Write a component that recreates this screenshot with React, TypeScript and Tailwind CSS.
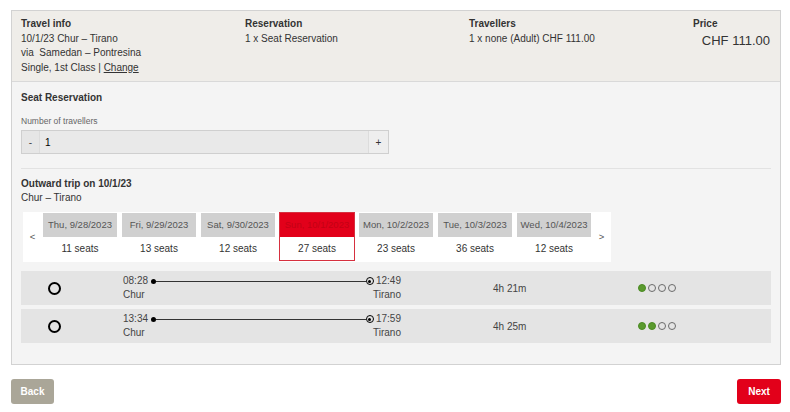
import React, { useState } from 'react';

interface DayTab {
    label: string;
    seats: number;
}

interface Connection {
    dep: string;
    arr: string;
    from: string;
    to: string;
    duration: string;
    load: number;
}

const days: DayTab[] = [
    { label: 'Thu, 9/28/2023', seats: 11 },
    { label: 'Fri, 9/29/2023', seats: 13 },
    { label: 'Sat, 9/30/2023', seats: 12 },
    { label: 'Sun, 10/1/2023', seats: 27 },
    { label: 'Mon, 10/2/2023', seats: 23 },
    { label: 'Tue, 10/3/2023', seats: 36 },
    { label: 'Wed, 10/4/2023', seats: 12 },
];

const connections: Connection[] = [
    { dep: '08:28', arr: '12:49', from: 'Chur', to: 'Tirano', duration: '4h 21m', load: 1 },
    { dep: '13:34', arr: '17:59', from: 'Chur', to: 'Tirano', duration: '4h 25m', load: 2 },
];

const LoadDots: React.FC<{ level: number }> = ({ level }) => (
    <div className="flex items-center gap-[2px]">
        {[0, 1, 2, 3].map((i) =>
            i < level ? (
                <span key={i} className="w-[8px] h-[8px] rounded-full bg-[#5a9a2e] border border-[#4a8a22]" />
            ) : (
                <span key={i} className="w-[8px] h-[8px] rounded-full border border-[#6b6b6b]" />
            )
        )}
    </div>
);

const ConnectionRow: React.FC<{ c: Connection }> = ({ c }) => (
    <div className="flex items-center h-[34px] bg-[#e4e4e4] text-[10px] text-[#444]">
        <div className="w-[102px] flex justify-start pl-[27px]">
            <span className="w-[13px] h-[13px] rounded-full border-2 border-black" />
        </div>
        <div className="w-[278px] flex flex-col leading-[14px]">
            <div className="flex items-center">
                <span>{c.dep}</span>
                <span className="ml-[3px] w-[5px] h-[5px] rounded-full bg-black" />
                <span className="flex-1 h-px bg-[#333]" />
                <span className="w-[8px] h-[8px] rounded-full border border-black flex items-center justify-center">
                    <span className="w-[3px] h-[3px] rounded-full bg-black" />
                </span>
                <span className="ml-[2px]">{c.arr}</span>
            </div>
            <div className="flex justify-between">
                <span>{c.from}</span>
                <span>{c.to}</span>
            </div>
        </div>
        <div className="w-[92px]" />
        <div className="w-[145px]">{c.duration}</div>
        <LoadDots level={c.load} />
    </div>
);

export default function App() {
    const [count, setCount] = useState(1);
    const [selected, setSelected] = useState(3);

    return (
        <div className="w-[790px] h-[412px] bg-white text-[#333] overflow-hidden" style={{ fontFamily: '"Liberation Sans", Arial, sans-serif' }}>
            <div className="ml-[11px] mt-[10px] w-[770px] border border-[#d2d2d2]">
                {/* summary header */}
                <div className="bg-[#efede9] border-b border-[#d9d9d9] h-[71px] px-[9px] pt-[6px] grid grid-cols-[224px_224px_224px_1fr] text-[10px] leading-[14.5px] text-[#333]">
                    <div>
                        <div className="font-bold">Travel info</div>
                        <div>10/1/23 Chur – Tirano</div>
                        <div>via &nbsp;Samedan – Pontresina</div>
                        <div>
                            Single, 1st Class | <span className="underline">Change</span>
                        </div>
                    </div>
                    <div>
                        <div className="font-bold">Reservation</div>
                        <div>1 x Seat Reservation</div>
                    </div>
                    <div>
                        <div className="font-bold">Travellers</div>
                        <div>1 x none (Adult) CHF 111.00</div>
                    </div>
                    <div className="flex flex-col">
                        <div className="font-bold">Price</div>
                        <div className="text-right text-[13px] leading-[18px] pr-[1px]">CHF 111.00</div>
                    </div>
                </div>

                {/* body */}
                <div className="bg-[#f4f4f4] px-[9px] pt-[9px] pb-[21px]">
                    <div className="font-bold text-[10px] leading-[14px]">Seat Reservation</div>
                    <div className="mt-[11px] text-[8.5px] leading-[10px] text-[#666]">Number of travellers</div>
                    <div className="mt-[4px] w-[368px] h-[24px] flex border border-[#cfcfcf] bg-[#e6e6e6] text-[10px]">
                        <button onClick={() => setCount(Math.max(1, count - 1))} className="w-[17px] flex items-center justify-center text-[#444]">
                            -
                        </button>
                        <div className="flex-1 bg-[#e9e9e9] border-l border-[#dcdcdc] flex items-center pl-[5px] text-black">{count}</div>
                        <button onClick={() => setCount(count + 1)} className="w-[20px] border-l border-[#dcdcdc] bg-[#eeeeee] flex items-center justify-center text-[#333]">
                            +
                        </button>
                    </div>

                    <div className="mt-[14px] h-px bg-[#e2e2e2]" />

                    <div className="mt-[8px] font-bold text-[10px] leading-[14px]">Outward trip on 10/1/23</div>
                    <div className="text-[10px] leading-[14px]">Chur – Tirano</div>

                    {/* date carousel */}
                    <div className="mt-[7px] ml-[2px] w-[588px] h-[50px] bg-white flex text-[9.5px] text-[#444]">
                        <div className="w-[19px] flex items-center justify-center text-[#555]">&lt;</div>
                        <div className="flex gap-[3px]">
                            {days.map((d, i) => {
                                const active = i === selected;
                                return (
                                    <button
                                        key={d.label}
                                        onClick={() => setSelected(i)}
                                        className={
                                            active
                                                ? 'w-[76px] h-[49px] flex flex-col border border-[#d6303f]'
                                                : 'w-[76px] h-[49px] flex flex-col border border-transparent'
                                        }
                                    >
                                        <span
                                            className={
                                                active
                                                    ? 'h-[24px] w-full flex items-center justify-center bg-[#e2001a] text-[#c40014]'
                                                    : 'h-[24px] w-full flex items-center justify-center bg-[#d0d0d0] text-[#555]'
                                            }
                                        >
                                            {d.label}
                                        </span>
                                        <span className="flex-1 w-full flex items-center justify-center bg-white text-[#333] text-[10px]">
                                            {d.seats} seats
                                        </span>
                                    </button>
                                );
                            })}
                        </div>
                        <div className="flex-1 flex items-center justify-center text-[#555]">&gt;</div>
                    </div>

                    {/* connections */}
                    <div className="mt-[9px] flex flex-col gap-[4px]">
                        {connections.map((c) => (
                            <ConnectionRow key={c.dep} c={c} />
                        ))}
                    </div>
                </div>
            </div>

            <div className="mx-[9px] mt-[14px] flex justify-between">
                <button className="ml-[2px] w-[43px] h-[25px] rounded-[3px] bg-[#aaa698] text-white font-bold text-[10px]">Back</button>
                <button className="w-[44px] h-[25px] rounded-[3px] bg-[#e2001a] text-white font-bold text-[10px]">Next</button>
            </div>
        </div>
    );
}
